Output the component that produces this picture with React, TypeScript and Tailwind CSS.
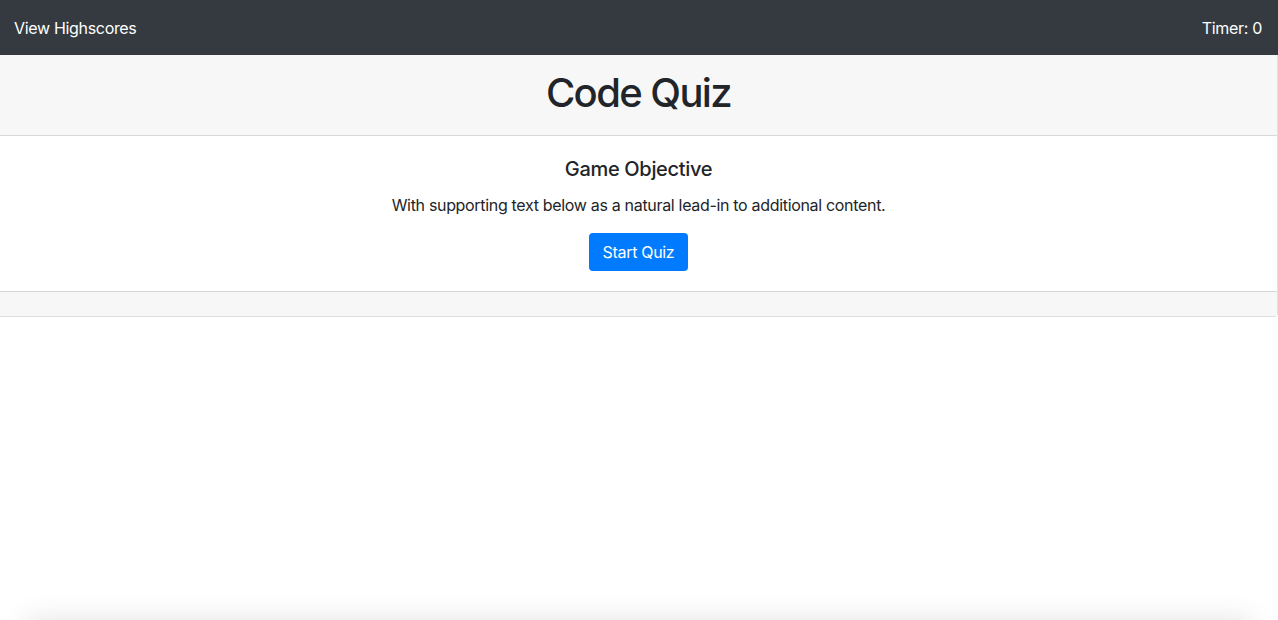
export default function App() {
  return (
    <div className="min-h-screen bg-white text-[#212529] overflow-hidden tracking-[-0.02em]" style={{ fontFamily: 'Inter, "Noto Sans", sans-serif' }}>
      {/* Top nav */}
      <nav className="h-[55px] bg-[#343a40] flex items-center justify-between px-[14px] text-white text-base">
        <a className="cursor-pointer">View Highscores</a>
        <span className="pr-[2px]">Timer: 0</span>
      </nav>

      {/* Quiz card */}
      <div className="border-r border-b border-[rgba(0,0,0,0.125)] rounded-br-[4px]">
        <div className="bg-[#f7f7f7] border-b border-[rgba(0,0,0,0.125)] px-5 pt-[14px] pb-[10px] text-center">
          <h1 className="text-[40px] leading-[48px] font-medium mb-2 tracking-[-0.04em]">Code Quiz</h1>
        </div>
        <div className="px-5 pt-[21px] pb-[20px] text-center">
          <h5 className="text-xl leading-6 font-medium mb-3">Game Objective</h5>
          <p className="text-base leading-6 mb-4">With supporting text below as a natural lead-in to additional content.</p>
          <button className="bg-[#007bff] text-white text-base leading-6 px-[14px] py-[7px] rounded-[4px]">Start Quiz</button>
        </div>
        <div className="bg-[#f7f7f7] border-t border-[rgba(0,0,0,0.125)] h-[25px]" />
      </div>

      {/* Shadowed box below the fold */}
      <div className="mx-[26px] mt-[304px] h-20 bg-white shadow-[0_0_30px_rgba(0,0,0,0.12)]" />
    </div>
  )
}
